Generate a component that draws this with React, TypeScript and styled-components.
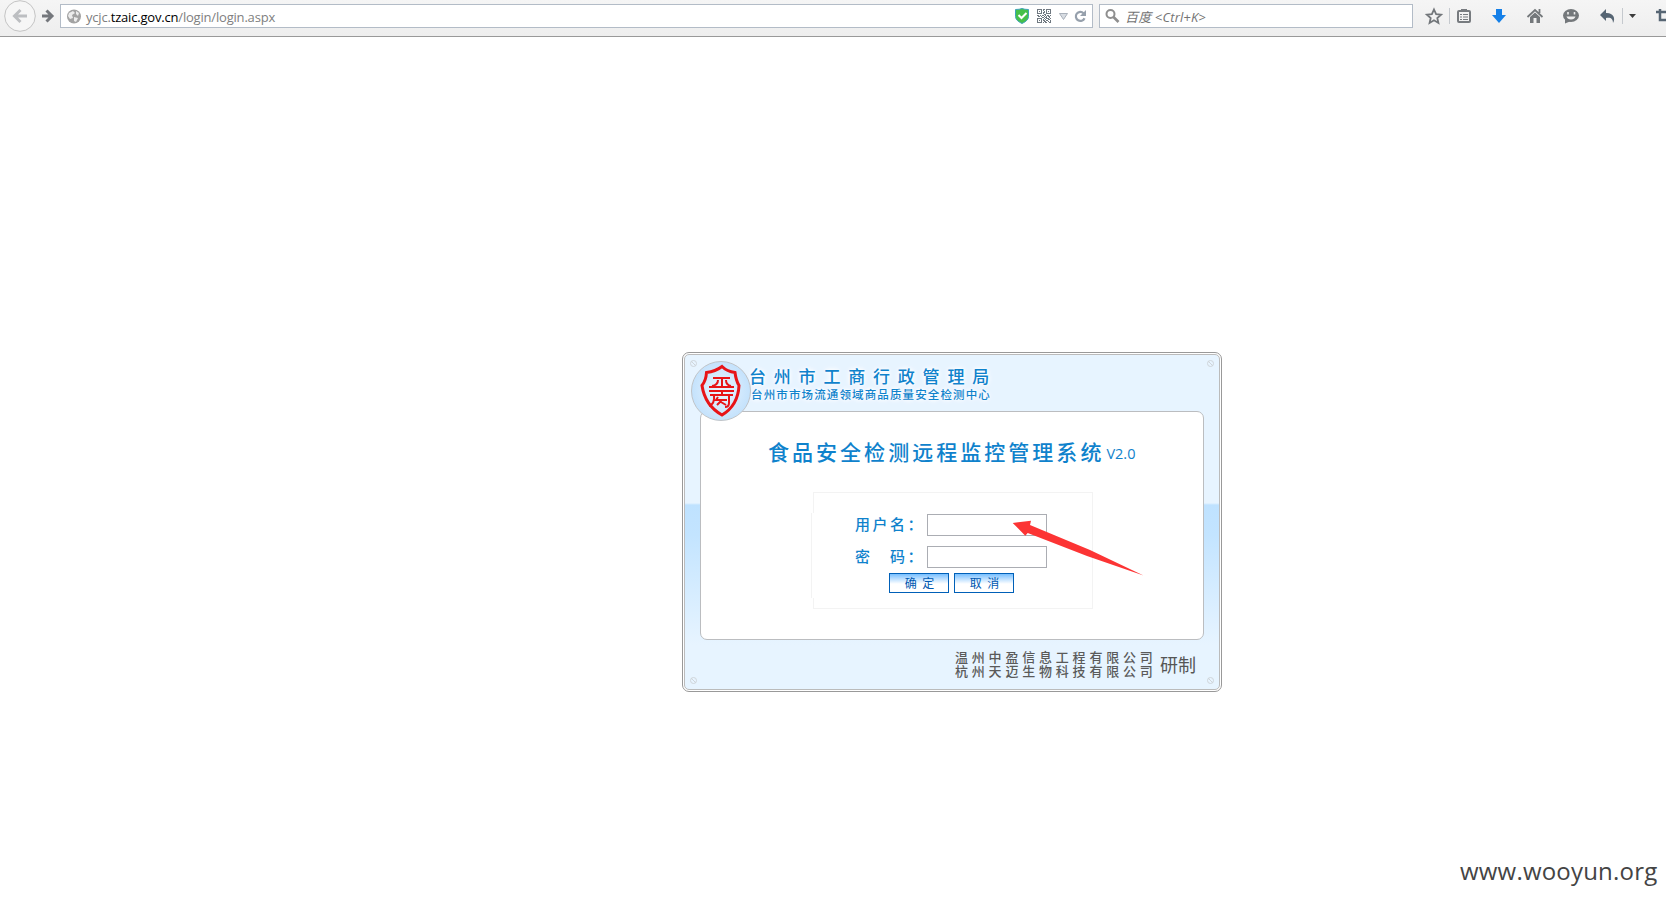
import React from "react";
import styled, { createGlobalStyle } from "styled-components";

const Global = createGlobalStyle`
  * { box-sizing: border-box; }
  body { margin: 0; background: #fff; overflow: hidden; }
`;
const cjk = `"Noto Sans CJK SC", sans-serif`;
const latin = `"Open Sans", "Noto Sans CJK SC", sans-serif`;

const Page = styled.div`
  height: 901px; display: flex; flex-direction: column; overflow: hidden;
`;
const Toolbar = styled.header`
  height: 37px; flex: none; display: flex; align-items: flex-start; position: relative;
  background: linear-gradient(#f5f5f5, #eee); border-bottom: 1px solid #999;
  overflow: hidden;
`;
const NavButtons = styled.div`
  width: 60px; height: 36px; flex: none;
`;
const Field = styled.div<{ $w: number }>`
  width: ${p => p.$w}px; height: 24px; margin: 4px 6px 0 0; flex: none;
  display: flex; align-items: center;
  background: #fff; border: 1px solid #b3bcc7;
`;
const Address = styled.span`
  flex: 1; margin: 1px 0 0 5px; font: 13px/22px ${latin}; letter-spacing: -0.19px; color: #808080; white-space: nowrap;
  b { font-weight: 400; color: #000; }
`;
const Hint = styled.span`
  margin: 1px 0 0 4px; font: italic 13px/22px ${latin}; letter-spacing: 0.15px; color: #737373; white-space: nowrap;
`;
const Stage = styled.main`
  flex: 1; padding: 315px 0 0 682px;
`;
const Panel = styled.section`
  width: 540px; height: 340px; position: relative;
  border: 1px solid #999; border-radius: 7px; background: #fff; padding: 1px;
`;
const PanelBody = styled.div`
  height: 336px; border: 1px solid #bbb; border-radius: 5px;
  padding: 0 15px; display: flex; flex-direction: column;
  background: linear-gradient(#e7f4ff 0 148px, #bfe2ff 150px, #c3e4ff 180px, #e7f4ff 290px, #e7f4ff);
`;
const Banner = styled.div`
  height: 56px; flex: none; padding: 9px 0 0 50px; display: flex; flex-direction: column;
`;
const Text = styled.div<{ $size: number; $pitch: number; $line: number; $weight?: number; $color?: string }>`
  font: ${p => p.$weight ?? 500} ${p => p.$size}px/${p => p.$line}px ${cjk};
  letter-spacing: ${p => p.$pitch - p.$size}px;
  color: ${p => p.$color ?? "#0f82cc"}; white-space: nowrap;
`;
const Bureau = styled(Text)`
  margin-left: -1px;
`;
const Centre = styled(Text)`
  margin: -1px 0 0 1px;
`;
const Glow = styled.div`
  text-shadow: 0 0 3px #fff, 0 0 5px #fff, 0 0 7px #fff;
`;
const Card = styled.div`
  width: 504px; height: 229px; flex: none; background: #fff;
  border: 1px solid #bbbdc0; border-radius: 7px;
`;
const Title = styled.h1`
  margin: 0; height: 80px; padding: 23px 0 0 67px; display: flex; align-items: flex-start;
`;
const Version = styled.span`
  font: 14.5px/32px ${latin}; color: #0f82cc; margin: 3px 0 0 2px;
`;
const FormFrame = styled.form`
  width: 282px; height: 117px; margin-left: 110px; position: relative;
  display: flex; flex-direction: column;
  &::before { content: ""; position: absolute; inset: 0 0 0 2px; border: 1px solid #f3f3f3; pointer-events: none; }
  &::after { content: ""; position: absolute; left: 0; top: 21px; width: 3px; height: 85px; background: #fff; border-left: 1px solid #f3f3f3; }
`;
const Row = styled.label`
  height: 22px; margin-bottom: 10px; padding-left: 44px; display: flex; align-items: center;
  &:first-of-type { margin-top: 22px; }
`;
const Label = styled(Text)`
  width: 72px; flex: none; overflow: hidden; white-space: pre; margin-top: -2px;
`;
const Gap = styled.span<{ $w: number }>`
  display: inline-block; width: ${p => p.$w}px;
`;
const Input = styled.input`
  width: 120px; height: 22px; border: 1px solid #abadb3; background: #fff; padding: 0 3px; outline: 0;
`;
const Buttons = styled.div`
  display: flex; gap: 5px; margin: -5px 0 0 78px;
`;
const Button = styled.button`
  width: 60px; height: 20px; padding: 0 0 0 1px; border: 1px solid #0060b8;
  background: linear-gradient(#78bfff, #fff 55%);
  font: 12px/18px ${cjk}; color: #0058b0; word-spacing: 3px;
`;
const Footer = styled.footer`
  padding: 10px 0 0 255px; display: flex; align-items: flex-start;
`;
const Companies = styled.div`
  width: 205px; flex: none;
`;
const Icons = styled.svg`
  flex: none; display: block;
`;
const Seal = styled.svg`
  position: absolute; left: 8px; top: 8px;
`;
const Screw = styled.i<{ $right?: boolean; $bottom?: boolean }>`
  position: absolute; width: 7px; height: 7px; border: 1px solid #cfd5da; border-radius: 50%;
  ${p => (p.$right ? "right: 7px;" : "left: 7px;")}
  ${p => (p.$bottom ? "bottom: 7px;" : "top: 7px;")}
  background: linear-gradient(45deg, transparent 42%, #cfd5da 43% 57%, transparent 58%);
`;
const Pointer = styled.svg`
  position: absolute; left: 329px; top: 166px; pointer-events: none;
`;
const Watermark = styled.div`
  position: absolute; left: 1460px; top: 853px;
  font: 24px/36px ${latin}; letter-spacing: 0.2px; color: #444; white-space: nowrap;
`;

const qr = ["11111011011111", "10001010010001", "10101001010101", "10001011010001", "11111010011111", "00000001100000", "11010110101101", "01101001010110", "00000110110010", "11111001011101", "10001010100110", "10101011011001", "10001001100101", "11111010110011"];

export default function App() {
  return (
    <Page>
      <Global />
      <Toolbar>
        <NavButtons>
          <Icons width="60" height="36">
            <circle cx="20" cy="16" r="15.3" fill="#f6f6f6" stroke="#c4c4c4" />
            <path d="M27 16H15M20.500 10l-6 6 6 6" fill="none" stroke="#bcbec1" strokeWidth="3" />
            <path d="M42 16h10M46.500 10.500l5.500 5.500-5.500 5.500" fill="none" stroke="#74777c" strokeWidth="3" />
          </Icons>
        </NavButtons>
        <Field $w={1033}>
          <Icons width="20" height="22">
            <circle cx="13" cy="11.500" r="7" fill="#a3a3a3" />
            <path d="M8 8l4-2 2 2-3 2 1 3-3 1-2-3zM15 6l3 2-1 3-2-2zM13 12l4 1-2 4-2-1z" fill="#ececec" />
          </Icons>
          <Address>ycjc.<b>tzaic.gov.cn</b>/login/login.aspx</Address>
          <Icons width="80" height="22" viewBox="1012 5 80 22">
            <path d="M1015.500 9.500q4 0 6.500-1 2.500 1 6.500 1v7q0 4-6.500 7-6.500-3-6.500-7z" fill="#45c04a" stroke="#3fa3b8" />
            <path d="M1018.500 15l3 3 5-5" fill="none" stroke="#fff" strokeWidth="2" />
            {qr.map((r, y) => [...r].map((c, x) => c === "1" && <rect key={x + "-" + y} x={1037 + x} y={9 + y} width="1" height="1" fill="#6f7880" />))}
            <path d="M1059.500 13.500h8l-4 6z" fill="#d7dce2" stroke="#aab1bb" />
            <path d="M1083.500 13.200a4.500 4.500 0 1 0 1 5" fill="none" stroke="#96a0ac" strokeWidth="2.200" />
            <path d="M1086 10v6h-6z" fill="#96a0ac" />
          </Icons>
        </Field>
        <Field $w={314}>
          <Icons width="21" height="22">
            <circle cx="10.500" cy="9" r="4" fill="none" stroke="#8e8e8e" strokeWidth="2" />
            <path d="M13.500 12l5 5" stroke="#8e8e8e" strokeWidth="2.600" />
          </Icons>
          <Hint>百度 &lt;Ctrl+K&gt;</Hint>
        </Field>
        <Icons width="247" height="36" viewBox="1419 0 247 36">
          <path d="M1434 9.500l2.100 4.600 5 .5-3.800 3.400 1.100 4.900-4.400-2.600-4.400 2.600 1.100-4.900-3.800-3.400 5-.5z" fill="none" stroke="#72767a" strokeWidth="1.800" />
          <path d="M1449.500 8v16M1622.500 8v16" stroke="#c5c9ce" />
          <rect x="1458" y="11" width="12" height="11" rx="1" fill="#f2f2f2" stroke="#777b7f" strokeWidth="2" />
          <path d="M1461 9h6v3h-6z" fill="#777b7f" />
          <path d="M1460 14.500h2M1463 14.500h5M1460 17h2M1463 17h5M1460 19.500h2M1463 19.500h5" stroke="#777b7f" strokeWidth="1.200" />
          <path d="M1496 9h6v6h4l-7 8-7-8h4z" fill="#1580e8" />
          <path d="M1527.500 17l7.500-7 7.500 7M1539.500 9v4" fill="none" stroke="#74787b" strokeWidth="1.800" />
          <path d="M1530 17l5-4.500 5 4.500v6h-3.500v-5h-3v5h-3.500z" fill="#74787b" />
          <ellipse cx="1571" cy="15.500" rx="8" ry="6.500" fill="#74787b" />
          <path d="M1565 18v5.500l6-2.500z" fill="#74787b" />
          <path d="M1568 12v2.500M1574.500 12v2.500" stroke="#eee" strokeWidth="1.600" />
          <path d="M1566.500 16.500h9q-1 3-4.500 3t-4.500-3z" fill="#eee" />
          <path d="M1600 15l6-6v4c7-.5 10 5 7 10 0-4-2-6-7-5v3z" fill="#566573" />
          <path d="M1629 14h7l-3.500 4z" fill="#3c3c3c" />
          <path d="M1656 12h14M1660 9v11h10M1663 12h4" fill="none" stroke="#566573" strokeWidth="2.500" />
        </Icons>
      </Toolbar>
      <Stage>
        <Panel>
          <PanelBody>
            <Banner>
              <Glow>
                <Bureau $size={17} $pitch={24.8} $line={24}>台州市工商行政管理局</Bureau>
                <Centre $size={11.5} $pitch={12.63} $line={14}>台州市市场流通领域商品质量安全检测中心</Centre>
              </Glow>
            </Banner>
            <Card>
              <Title>
                <Text as="span" $size={21} $pitch={24.03} $line={32}>食品安全检测远程监控管理系统</Text>
                <Version>V2.0</Version>
              </Title>
              <FormFrame>
                <Row>
                  <Label as="span" $size={15} $pitch={17.5} $line={22}>用户名：</Label>
                  <Input />
                </Row>
                <Row>
                  <Label as="span" $size={15} $pitch={17.5} $line={22}>密<Gap $w={17.5} />码：</Label>
                  <Input type="password" />
                </Row>
                <Buttons>
                  <Button type="button">确 定</Button>
                  <Button type="button">取 消</Button>
                </Buttons>
              </FormFrame>
            </Card>
            <Footer>
              <Companies>
                <Text $size={13} $pitch={16.8} $line={14} $color="#5a5a5a">温州中盈信息工程有限公司</Text>
                <Text $size={13} $pitch={16.8} $line={14} $color="#5a5a5a">杭州天迈生物科技有限公司</Text>
              </Companies>
              <Text $size={18} $pitch={18} $line={28} $weight={400} $color="#555">研制</Text>
            </Footer>
          </PanelBody>
          <Screw /><Screw $right /><Screw $bottom /><Screw $right $bottom />
          <Seal width="60" height="60" viewBox="0 0 60 60">
            <defs><radialGradient id="disc"><stop offset="0" stopColor="#eaf5ff" /><stop offset="1" stopColor="#c4e2fc" /></radialGradient></defs>
            <circle cx="30" cy="30" r="29.500" fill="url(#disc)" stroke="#c0c4c8" />
            <path d="M31 5.500q5 5 13 6 1 8 4 13-1 20-17 29.500-17-9.500-20-29.500 4-5 4.500-13 9-1 15.500-6z" fill="none" stroke="#e81418" strokeWidth="3" />
            <path d="M22 17h17M31 17v8M27 19q0 5-6 6M35 19q0 5 5 6M18 26h25M18 30h25M31 30v3M19 34h23M23 34q1 9-5 11M38 34v8q0 4-4 4M27 36l-2 3h11M31 39l-5 5M30 41l5 3" fill="none" stroke="#e81418" strokeWidth="2" />
          </Seal>
          <Pointer width="135" height="60" viewBox="1012 519 135 60">
            <path d="M1012.700 523l18.300-2.300-1 4.300 60 25 53.500 25.500-56.500-19.500-59.300-23-2.400 2.700z" fill="#fc3434" />
          </Pointer>
        </Panel>
      </Stage>
      <Watermark>www.wooyun.org</Watermark>
    </Page>
  );
}
